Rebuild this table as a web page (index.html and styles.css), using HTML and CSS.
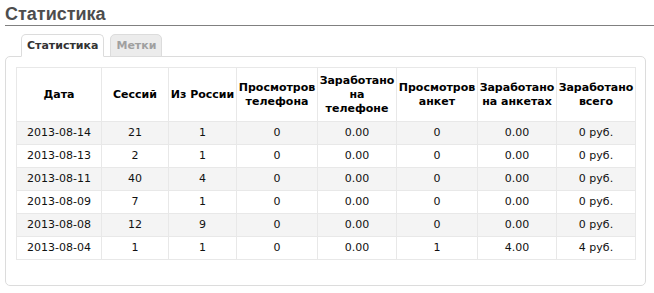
FILE: index.html
```html
<!DOCTYPE html>
<html lang="ru">
<head>
<meta charset="utf-8">
<title>Статистика</title>
<link rel="stylesheet" href="styles.css">
</head>
<body>
<div class="page">
  <h1 class="title">Статистика</h1>
  <div class="tabs-block">
    <ul class="tabs">
      <li class="tab tab-active">Статистика</li>
      <li class="tab tab-inactive">Метки</li>
    </ul>
    <div class="panel">
      <table class="stats">
        <colgroup>
          <col class="c-date"><col class="c-sess"><col class="c-rus"><col class="c-w81"><col class="c-w79"><col class="c-w81"><col class="c-w79"><col class="c-w79">
        </colgroup>
        <thead>
          <tr>
            <th>Дата</th>
            <th>Сессий</th>
            <th>Из России</th>
            <th>Просмотров телефона</th>
            <th>Заработано на телефоне</th>
            <th>Просмотров анкет</th>
            <th>Заработано на анкетах</th>
            <th>Заработано всего</th>
          </tr>
        </thead>
        <tbody>
          <tr><td>2013-08-14</td><td>21</td><td>1</td><td>0</td><td>0.00</td><td>0</td><td>0.00</td><td>0 руб.</td></tr>
          <tr><td>2013-08-13</td><td>2</td><td>1</td><td>0</td><td>0.00</td><td>0</td><td>0.00</td><td>0 руб.</td></tr>
          <tr><td>2013-08-11</td><td>40</td><td>4</td><td>0</td><td>0.00</td><td>0</td><td>0.00</td><td>0 руб.</td></tr>
          <tr><td>2013-08-09</td><td>7</td><td>1</td><td>0</td><td>0.00</td><td>0</td><td>0.00</td><td>0 руб.</td></tr>
          <tr><td>2013-08-08</td><td>12</td><td>9</td><td>0</td><td>0.00</td><td>0</td><td>0.00</td><td>0 руб.</td></tr>
          <tr><td>2013-08-04</td><td>1</td><td>1</td><td>0</td><td>0.00</td><td>1</td><td>4.00</td><td>4 руб.</td></tr>
        </tbody>
      </table>
    </div>
  </div>
</div>
</body>
</html>
```

FILE: styles.css
```css
html, body {
  margin: 0;
  padding: 0;
  background: #fff;
}
body {
  font-family: "DejaVu Sans", Verdana, sans-serif;
  color: #111;
}
.page {
  padding: 3px 0 0 5px;
}
.title {
  margin: 0;
  font-family: "Liberation Sans", Arial, sans-serif;
  font-size: 18px;
  line-height: 22px;
  font-weight: bold;
  color: #4d4d4d;
  border-bottom: 1px solid #808080;
}
.tabs-block {
  margin-top: 8px;
  width: 641px;
}
.tabs {
  list-style: none;
  margin: 0 0 -1px 16px;
  padding: 0;
  display: flex;
  gap: 6px;
  position: relative;
  z-index: 1;
}
.tab {
  font-size: 11px;
  font-weight: bold;
  line-height: 22px;
  height: 23px;
  box-sizing: border-box;
  padding: 0 5px;
  border: 1px solid #dcdcdc;
  border-radius: 5px 5px 0 0;
}
.tab-active {
  background: #fff;
  color: #333;
  border-bottom-color: #fff;
}
.tab-inactive {
  background: #ececec;
  color: #a0a0a0;
  border-bottom-color: #dcdcdc;
}
.panel {
  border: 1px solid #dcdcdc;
  border-radius: 5px;
  padding: 10px 10px 25px 10px;
}
.stats {
  border-collapse: collapse;
  table-layout: fixed;
  width: 620px;
  font-size: 11px;
}
.c-date { width: 85px; }
.c-sess { width: 67px; }
.c-rus { width: 68px; }
.c-w81 { width: 81px; }
.c-w79 { width: 79px; }
.stats th, .stats td {
  border: 1px solid #e8e8e8;
  text-align: center;
  padding: 0;
}
.stats th {
  height: 53px;
  line-height: 14px;
  font-weight: bold;
  color: #000;
}
.stats td {
  height: 22px;
  line-height: 14px;
  color: #111;
}
.stats tbody tr:nth-child(odd) td {
  background: #f4f4f4;
}
```
